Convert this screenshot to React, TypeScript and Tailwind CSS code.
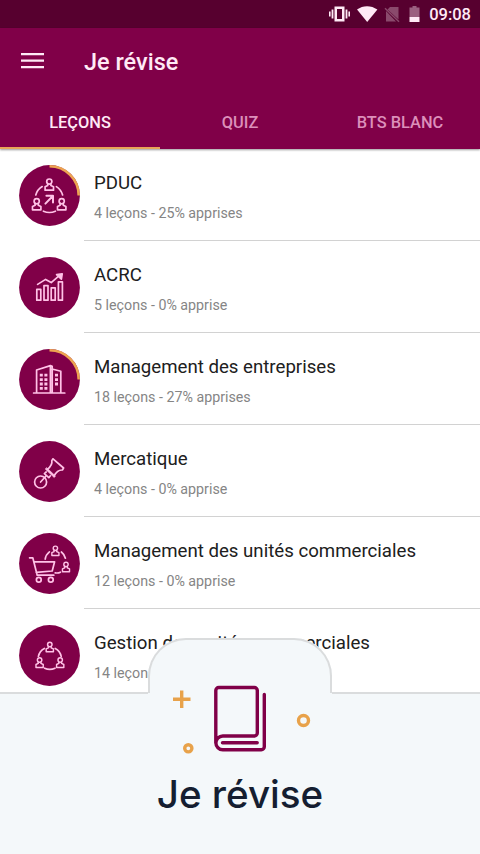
import type {ReactNode} from "react";

const Person = ({x, y}: { x: number, y: number }) => (
    <g transform={`translate(${x} ${y})`}>
        <circle cx="0" cy="-3" r="2.6"/>
        <path d="M-1.6 -0.8v1.8l-2.6 1.2v3.4h8.4v-3.4l-2.6-1.2v-1.8"/>
    </g>
);

const TeamArrowIcon = () => (
    <>
        <Person x={39.3} y={29.6}/>
        <Person x={26.7} y={49.2}/>
        <Person x={51.7} y={49.2}/>
        <path d="M32.2 31.6a14.5 14.5 0 0 0-6.4 8.4M46.4 31.6a14.5 14.5 0 0 1 6.2 8.4M33.4 56.2a15 15 0 0 0 12 0"/>
        <path d="M35.4 48.6l7.4-7.6M36.4 40.8h6.6v6.8" strokeWidth="2"/>
    </>
);

const GrowthIcon = () => (
    <>
        <path d="M26.8 42.3h4v10.9h-4zM34 38.6h4v14.6h-4zM41.2 40.8h4v12.4h-4zM48.4 34.8h4v18.4h-4z"/>
        <path d="M27.6 37.4l8-5 5.6 3.2 8.6-7.4"/>
        <path d="M46.6 27.6l5.6-.8-.8 5.4z" fill="currentColor"/>
    </>
);

const BuildingIcon = () => (
    <>
        <path d="M23.6 54h31.2M26.6 54V31l13.8-4.4V54M42 30l8.8 2.2V54M40.4 26.6l1.8.6V54"/>
        <g strokeWidth="2.8" strokeLinecap="butt">
            <path d="M29.8 36.2h3M34.4 36.2h3M29.8 40.6h3M34.4 40.6h3M29.8 45h3M34.4 45h3M29.8 49.4h3M34.4 49.4h3M45 36.2h3M45 40.6h3M45 45h3"/>
        </g>
    </>
);

const PinIcon = () => (
    <>
        <circle cx="30.6" cy="51" r="6"/>
        <path d="M30.6 51l5.4-6"/>
        <path d="M34.4 42.6l4.4 4M34.4 42.6l1.8-1.6M38.8 46.6l1.6-1.8"/>
        <path d="M35.4 38.2l8.8 8.4 1.2-1.6-8.6-8.2z" fill="currentColor" strokeWidth="0.6"/>
        <path d="M37.4 38.4c3-2.6 5.200-5.200 4.400-8.800l1.200-1.800 10.600 9.200-1.200 2c-3.600-.2-6.400 2.200-8.400 6"/>
    </>
);

const CartIcon = () => (
    <>
        <path d="M19.6 34.8h3.2l4.4 17.4h16.6M23.8 38.8h20.8l-2.4 9.2-16 1.4"/>
        <circle cx="28.8" cy="56.8" r="2.4"/>
        <circle cx="40.8" cy="56.8" r="2.4"/>
        <g transform="translate(45.4 27.8) scale(.84)"><Person x={0} y={0}/></g>
        <g transform="translate(56 44) scale(.84)"><Person x={0} y={0}/></g>
        <path d="M39.4 28.8a11 11 0 0 0-4.2 7.4M51.4 29a11 11 0 0 1 4 6.2M45.2 49.8c2 .4 3.6.2 5.2-.6"/>
    </>
);

const TeamIcon = () => (
    <>
        <g transform="translate(39.8 32) scale(.86)"><Person x={0} y={0}/></g>
        <g transform="translate(29.6 47.6) scale(.86)"><Person x={0} y={0}/></g>
        <g transform="translate(50.2 47.6) scale(.86)"><Person x={0} y={0}/></g>
        <path d="M34.4 33.4a11.5 11.5 0 0 0-6 8M45.2 33.4a11.5 11.5 0 0 1 6 8M34.6 53.2a12 12 0 0 0 10.4 0"/>
    </>
);

type Lesson = { title: string, info: string, icon: ReactNode, progress?: boolean };

const lessons: Lesson[] = [
    {title: "PDUC", info: "4 leçons - 25% apprises", icon: <TeamArrowIcon/>, progress: true},
    {title: "ACRC", info: "5 leçons - 0% apprise", icon: <GrowthIcon/>},
    {title: "Management des entreprises", info: "18 leçons - 27% apprises", icon: <BuildingIcon/>, progress: true},
    {title: "Mercatique", info: "4 leçons - 0% apprise", icon: <PinIcon/>},
    {title: "Management des unités commerciales", info: "12 leçons - 0% apprise", icon: <CartIcon/>},
    {title: "Gestion des unités commerciales", info: "14 leçons - 0% apprise", icon: <TeamIcon/>},
];

const StatusBar = () => (
    <div className="flex h-7 items-center justify-end bg-[#57002f] pr-[9px] text-[#ffeaf6]">
        <svg width="98" height="28" viewBox="0 0 98 28" fill="currentColor">
            <path d="M5.5 6.5h10v15h-10zM8 9v10h5V9z" fillRule="evenodd"/>
            <path d="M2.6 9.5h1.8v9H2.6zM16.6 9.5h1.8v9h-1.8zM0 11.5h1.6v5H0zM19.4 11.5H21v5h-1.6z"/>
            <path d="M28 9.6C34 5 42 5 48.4 9.6L38.2 22z"/>
            <path d="M61 7h8.5v12.6L58.5 9.5zM57 11l10 10.5H57z" fill="#8a4a6c"/>
            <path d="M56 8.2l14 13.6" stroke="#8a4a6c" strokeWidth="1.4"/>
            <path d="M80.5 7.5h3V6h4v1.5h3V17h-10z" fill="#9b6080"/>
            <path d="M80.5 17h10v5h-10z"/>
        </svg>
        <span className="ml-0.5 w-[42px] pt-0.5 text-right text-[16.5px] font-medium leading-7 whitespace-nowrap">09:08</span>
    </div>
);

const LessonRow = ({title, info, icon, progress}: Lesson) => (
    <div className="flex h-[92px] pl-[19px]">
        <svg
            className="mt-4 h-[61px] w-[61px] shrink-0 text-[#ffc2e7]"
            viewBox="9 10 61 61"
            fill="none"
            stroke="currentColor"
            strokeWidth="1.7"
            strokeLinejoin="round"
            strokeLinecap="round">
            <circle cx="39.5" cy="40.5" r="30.4" fill="#800048" stroke="none"/>
            {progress && <path d="M39.5 11.3A29.2 29.2 0 0 1 68.7 40.5" stroke="#eda451" strokeWidth="2.6" strokeLinecap="butt"/>}
            {icon}
        </svg>
        <div className="ml-1 flex-1 border-b border-[#d2d2d2] pt-[22px] pl-2.5">
            <p className="text-[18.65px] leading-6 whitespace-nowrap text-[#202020]">{title}</p>
            <p className="mt-2 text-[14.25px] leading-[21px] whitespace-nowrap text-[#858585]">{info}</p>
        </div>
    </div>
);

const App = () => {
    return (
        <div className="relative h-[854px] w-[480px] overflow-hidden bg-white font-['Roboto',sans-serif]">
            <StatusBar/>
            <header className="relative h-[121px] bg-[#800048] shadow-[0_1px_2px_rgba(0,0,0,0.4)]">
                <div className="flex h-[66px] items-center pl-[21px] text-[#ffeaf6]">
                    <svg width="23" height="18" viewBox="0 0 23 18" stroke="currentColor" strokeWidth="2.2">
                        <path d="M0 2.2h23M0 8.7h23M0 15.2h23"/>
                    </svg>
                    <h1 className="ml-10 pt-1 text-[23.5px] font-medium">Je révise</h1>
                </div>
                <nav className="grid h-[55px] grid-cols-3 text-center text-[16.4px] leading-[58px] font-medium text-[#dc8fba]">
                    <div className="h-[55px] border-b-2 border-[#e8a557] text-[#ffeaf6]">LEÇONS</div>
                    <div>QUIZ</div>
                    <div>BTS BLANC</div>
                </nav>
            </header>
            <main>
                {lessons.map((lesson) => <LessonRow key={lesson.title} {...lesson}/>)}
            </main>

            {/* bottom sheet with its raised tab */}
            <div className="absolute inset-x-0 bottom-0 flex flex-col items-center">
                <div className="z-10 -mb-14 h-[110px] w-[184px] rounded-t-[38px] bg-[#f4f8fa]">
                    <div className="h-[55px] rounded-t-[38px] border-2 border-b-0 border-[#dadcdd]"/>
                </div>
                <div className="flex h-[162px] w-full flex-col items-center border-t-2 border-[#dadcdd] bg-[#f4f8fa]">
                    <svg className="z-20 -mt-3 h-[76px] w-[144px] shrink-0" viewBox="168 682 144 76" fill="none">
                        <g stroke="#e8a24a" strokeWidth="3.4">
                            <path d="M181.7 690.5v17.5M173 699.3h17.5"/>
                            <circle cx="303.5" cy="720.5" r="5"/>
                            <circle cx="188.3" cy="748.3" r="3.6"/>
                        </g>
                        <g stroke="#800048" strokeWidth="3.4" strokeLinecap="round" strokeLinejoin="round">
                            <path d="M215.8 743V690.5a3 3 0 0 1 3-3h35.5a3 3 0 0 1 3 3v42.5a3 3 0 0 1-3 3h-31.5a6.9 6.9 0 0 0 0 13.8h38.5a3 3 0 0 0 3-3V694.5"/>
                            <path d="M222.5 742.7h34.7"/>
                        </g>
                    </svg>
                    <p className="mt-[13px] font-['Inter',sans-serif] text-[38.6px] leading-[46px] font-medium text-[#151e31]">Je révise</p>
                </div>
            </div>
        </div>
    );
};

export default App;
